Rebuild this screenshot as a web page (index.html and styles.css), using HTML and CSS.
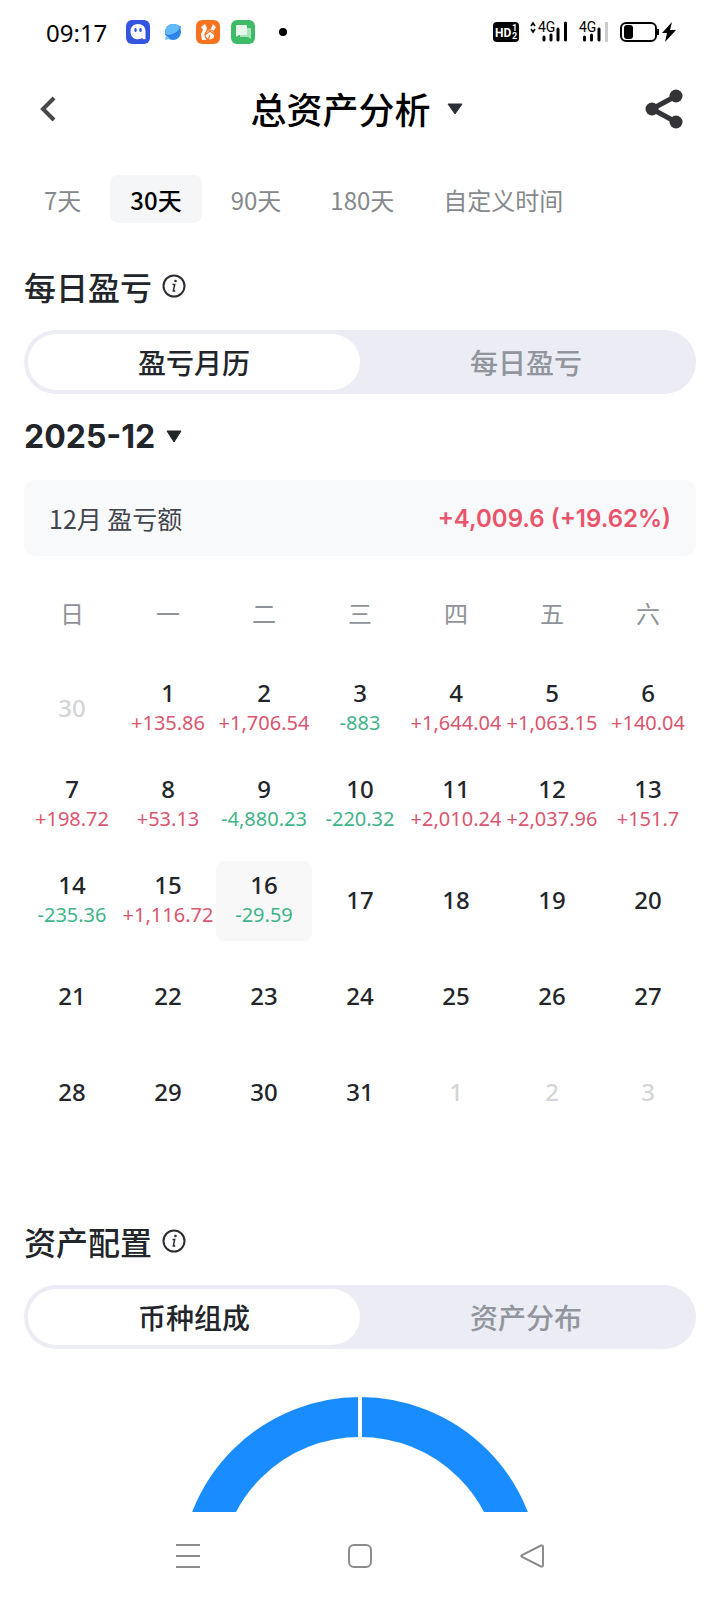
FILE: index.html
```html
<!DOCTYPE html>
<html lang="zh-CN">
<head>
  <meta charset="UTF-8">
  <meta name="viewport" content="width=device-width, initial-scale=1">
  <title>总资产分析</title>
  <link rel="stylesheet" href="styles.css">
</head>
<body>

  <!-- 状态栏 -->
  <div class="status">
    <span class="time">09:17</span>
    <div class="apps">
      <svg width="24" height="24" viewBox="0 0 24 24">
        <rect width="24" height="24" rx="6" fill="#3355e0"/>
        <path d="M12 4c4.400 0 7.500 3 7.500 7.200V19c-1.600.8-2.800.2-3.500-1-1 .8-2.400 1.200-4 1.200-4.600 0-7.500-3.200-7.500-7.800S7.600 4 12 4z" fill="#fff"/>
        <ellipse cx="9.500" cy="10" rx="1.300" ry="2" fill="#3355e0"/>
        <ellipse cx="14.500" cy="10" rx="1.300" ry="2" fill="#3355e0"/>
      </svg>
      <svg width="24" height="24" viewBox="0 0 24 24">
        <circle cx="12" cy="12" r="8" fill="#2f86ea"/>
        <path d="M19 6c1 3-2 6-6 8-4 2-8 2-9-1 0-5 3.600-9 8-9 3 0 5 .5 7 2z" fill="#62baf7"/>
        <path d="M19 6c1 3-2 6-6 8-4 2-7 2-9 0" stroke="#1f6fd8" stroke-width="1" fill="none"/>
        <path d="M4 20l1-5 4 4z" fill="#7cc8f8"/>
      </svg>
      <svg width="24" height="24" viewBox="0 0 24 24">
        <rect width="24" height="24" rx="6" fill="#f5731f"/>
        <path d="M5 7l4-3 2 4-1 3 5-2 2-5 3 3-3 5-4 1-3 7H6l-1-6 2-4z" fill="#fff"/>
        <circle cx="14" cy="15" r="5" fill="#fff" stroke="#f5731f" stroke-width="1.200"/>
        <path d="M9 15l5-4 6 5M14 15l-2 5" stroke="#f5731f" stroke-width="1.200" fill="none"/>
      </svg>
      <svg width="24" height="24" viewBox="0 0 24 24">
        <rect width="24" height="24" rx="6" fill="#3dbb66"/>
        <path d="M9 8h10a1 1 0 0 1 1 1v10l-3-2H9z" fill="#a9e3ba"/>
        <path d="M6 5h9a1 1 0 0 1 1 1v8a1 1 0 0 1-1 1H8l-3 2V6a1 1 0 0 1 1-1z" fill="#e6f7ea"/>
      </svg>
    </div>
    <span class="dot"></span>
    <div class="signals">
      <svg width="26" height="20" viewBox="0 0 26 20">
        <rect width="26" height="20" rx="4" fill="#000"/>
        <text x="2" y="15" class="hd">HD</text>
        <text x="19" y="9" class="hd-small">1</text>
        <text x="19" y="17" class="hd-small">2</text>
      </svg>
      <svg width="38" height="30" viewBox="0 -4 38 30">
        <path d="M1 5l2-3 2 3M1 8l2 3 2-3" stroke="#000" stroke-width="1.600" fill="none"/>
        <text x="8" y="11" class="net">4G</text>
        <path d="M14 16v3M21 14v5M28 8v11M35.500 2v17" stroke="#000" stroke-width="3" stroke-linecap="round"/>
      </svg>
      <svg width="30" height="30" viewBox="0 -4 30 30">
        <text x="0" y="11" class="net">4G</text>
        <path d="M5.500 16v3M12.500 14v5M20 8v11" stroke="#000" stroke-width="3" stroke-linecap="round"/>
        <path d="M27.500 1v20" stroke="#ccc" stroke-width="3"/>
      </svg>
      <svg width="57" height="20" viewBox="0 0 57 20">
        <rect x="1" y="1" width="35" height="18" rx="5" fill="none" stroke="#000" stroke-width="2"/>
        <rect x="4" y="3" width="9" height="14" rx="3" fill="#000"/>
        <path d="M38 7v6" stroke="#000" stroke-width="2"/>
        <path d="M52 0l-10 11h5l-2 9 11-12h-6z" fill="#000"/>
      </svg>
    </div>
  </div>

  <!-- 标题 -->
  <header class="header">
    <button class="icon-btn" aria-label="返回">
      <svg width="16" height="26" viewBox="0 0 16 26"><path d="M14 2L3 13l11 11" fill="none" stroke="#46484c" stroke-width="4"/></svg>
    </button>
    <button class="title">
      <h1>总资产分析</h1>
      <svg width="16" height="12" viewBox="0 0 16 12"><path d="M1 1h14L8 11z" fill="#2b2e33" stroke="#2b2e33" stroke-linejoin="round"/></svg>
    </button>
    <button class="icon-btn" aria-label="分享">
      <svg width="38" height="40" viewBox="0 0 38 40">
        <path d="M31 7L7 20l24 13" fill="none" stroke="#333438" stroke-width="5"/>
        <circle cx="31" cy="7" r="6.500" fill="#333438"/>
        <circle cx="7" cy="20" r="6.500" fill="#333438"/>
        <circle cx="31" cy="33" r="6.500" fill="#333438"/>
      </svg>
    </button>
  </header>

  <!-- 时间范围 -->
  <nav class="ranges">
    <button>7天</button>
    <button class="active">30天</button>
    <button>90天</button>
    <button>180天</button>
    <button>自定义时间</button>
  </nav>

  <main>
    <!-- 每日盈亏 -->
    <section class="daily">
      <h2>每日盈亏
        <svg width="24" height="24" viewBox="0 0 24 24"><circle cx="12" cy="12" r="10.500" fill="none" stroke="#2b2d33" stroke-width="2"/><circle cx="13.500" cy="7" r="1.300" fill="#2b2d33"/><path d="M10.500 10.500h2.200L11.300 17h2" fill="none" stroke="#2b2d33" stroke-width="1.500"/></svg>
      </h2>
      <div class="switch">
        <button class="active">盈亏月历</button>
        <button>每日盈亏</button>
      </div>

      <button class="month">2025-12
        <svg width="16" height="14" viewBox="0 0 16 14"><path d="M1 1h14L8 12z" fill="#22252a" stroke="#22252a" stroke-linejoin="round"/></svg>
      </button>

      <div class="summary">
        <span>12月 盈亏额</span>
        <strong>+4,009.6 (+19.62%)</strong>
      </div>

      <table class="calendar">
        <thead>
          <tr><th>日</th><th>一</th><th>二</th><th>三</th><th>四</th><th>五</th><th>六</th></tr>
        </thead>
        <tbody id="days"></tbody>
      </table>
    </section>

    <!-- 资产配置 -->
    <section>
      <h2>资产配置
        <svg width="24" height="24" viewBox="0 0 24 24"><circle cx="12" cy="12" r="10.500" fill="none" stroke="#2b2d33" stroke-width="2"/><circle cx="13.500" cy="7" r="1.300" fill="#2b2d33"/><path d="M10.500 10.500h2.200L11.300 17h2" fill="none" stroke="#2b2d33" stroke-width="1.500"/></svg>
      </h2>
      <div class="switch">
        <button class="active">币种组成</button>
        <button>资产分布</button>
      </div>
      <svg class="donut" width="360" height="115" viewBox="0 0 360 115">
        <circle cx="180" cy="180" r="160" fill="none" stroke="#198cff" stroke-width="40"/>
        <path d="M180 0v42" stroke="#fff" stroke-width="4"/>
      </svg>
    </section>
  </main>

  <!-- 系统导航 -->
  <footer class="sysnav">
    <button aria-label="菜单"><svg width="26" height="26" viewBox="0 0 26 26"><path d="M1 2h24M1 13h24M1 24h24" stroke="#8c8c8c" stroke-width="2"/></svg></button>
    <button aria-label="主页"><svg width="26" height="26" viewBox="0 0 26 26"><rect x="2" y="2" width="22" height="22" rx="5" fill="none" stroke="#8c8c8c" stroke-width="2"/></svg></button>
    <button aria-label="返回上一级"><svg width="26" height="26" viewBox="0 0 26 26"><path d="M22 2.500L3 12q-1.500 1 0 2l19 9.500q2 .5 2-1.500V4q0-2-2-1.500z" fill="none" stroke="#8c8c8c" stroke-width="2"/></svg></button>
  </footer>

  <script>
    const pnl = ["+135.86", "+1,706.54", "-883", "+1,644.04", "+1,063.15", "+140.04", "+198.72", "+53.13",
      "-4,880.23", "-220.32", "+2,010.24", "+2,037.96", "+151.7", "-235.36", "+1,116.72", "-29.59"];
    const today = 16;
    const tbody = document.getElementById("days");

    // 从 11 月 30 日开始，共 5 周
    for (let w = 0; w < 5; w++) {
      const tr = document.createElement("tr");
      for (let d = 0; d < 7; d++) {
        const n = w * 7 + d;
        const inMonth = n >= 1 && n <= 31;
        const day = n === 0 ? 30 : n > 31 ? n - 31 : n;
        const value = inMonth ? pnl[n - 1] : "";
        let html = `<span class="num">${day}</span>`;
        if (value) {
          html += `<span class="${value[0] === "+" ? "up" : "down"}">${value}</span>`;
        }
        const td = document.createElement("td");
        td.innerHTML = `<div class="day${inMonth ? "" : " other"}${n === today ? " today" : ""}">${html}</div>`;
        tr.appendChild(td);
      }
      tbody.appendChild(tr);
    }
  </script>

</body>
</html>
```
FILE: styles.css
```css
* {
  box-sizing: border-box;
}

body {
  margin: 0;
  background: #fff;
  color: #22252a;
  font-family: Inter, "Noto Sans CJK SC", sans-serif;
}

button {
  padding: 0;
  border: none;
  background: none;
  font: inherit;
  color: inherit;
  cursor: pointer;
}

svg {
  display: block;
  flex: none;
}

/* status bar */
.status {
  display: flex;
  align-items: center;
  height: 64px;
  padding: 0 43px 0 46px;
  color: #000;
}

.time {
  width: 80px;
  font-family: "Noto Sans", sans-serif;
  font-size: 24px;
}

.apps {
  display: flex;
  gap: 11px;
}

.dot {
  width: 8px;
  height: 8px;
  margin-left: 24px;
  border-radius: 50%;
  background: #000;
}

.signals {
  display: flex;
  align-items: center;
  gap: 11px;
  margin-left: auto;
}

.hd {
  fill: #fff;
  font: bold 12px Roboto, sans-serif;
}

.hd-small {
  fill: #fff;
  font: bold 9px Roboto, sans-serif;
}

.net {
  font: 14px Roboto, sans-serif;
}

/* header */
.header {
  display: flex;
  align-items: center;
  justify-content: space-between;
  height: 90px;
  padding: 0 37px 0 40px;
}

.title {
  display: flex;
  align-items: center;
  gap: 16px;
  margin-left: 12px;
  color: #000;
}

.title h1 {
  margin: 0;
  padding-top: 3px;
  font-size: 36px;
  font-weight: 500;
  line-height: 48px;
}

/* range tabs */
.ranges {
  display: flex;
  gap: 9px;
  padding: 21px 24px 0;
}

.ranges button {
  height: 48px;
  padding: 0 20px;
  border-radius: 8px;
  color: #85888c;
  font-family: "Noto Sans CJK SC", sans-serif;
  font-size: 24px;
}

.ranges .active {
  background: #f5f6f8;
  color: #000;
  font-weight: 500;
}

main {
  padding: 40px 24px 0;
}

.daily {
  margin-bottom: 77px;
}

h2 {
  display: flex;
  align-items: center;
  gap: 10px;
  margin: 0 0 17px;
  padding-top: 2px;
  font-size: 32px;
  font-weight: 500;
  line-height: 48px;
}

h2 svg {
  margin-bottom: 7px;
}

/* segmented switch */
.switch {
  display: flex;
  height: 64px;
  padding: 4px;
  border-radius: 32px;
  background: #ebecf4;
}

.switch button {
  flex: 1;
  border-radius: 28px;
  color: #92959e;
  font-size: 28px;
  font-weight: 500;
}

.switch .active {
  background: #fff;
  color: #22252a;
}

.month {
  display: flex;
  align-items: center;
  gap: 11px;
  margin: 22px 0;
  font-size: 32px;
  font-weight: 700;
  line-height: 42px;
}

.summary {
  display: flex;
  align-items: center;
  justify-content: space-between;
  height: 76px;
  padding: 0 25px;
  border-radius: 12px;
  background: #f8f9fb;
  font-size: 24px;
}

.summary span {
  color: #41454c;
  font-family: "Noto Sans CJK SC", sans-serif;
  font-size: 25px;
}

.summary strong {
  color: #e9546b;
  font-weight: 600;
}

/* calendar */
.calendar {
  width: 100%;
  margin-top: 39px;
  border-collapse: collapse;
  table-layout: fixed;
}

.calendar th {
  padding: 0 0 31px;
  color: #8f9298;
  font-size: 24px;
  font-weight: 400;
}

.calendar td {
  padding: 8px 0;
}

.day {
  display: flex;
  flex-direction: column;
  align-items: center;
  justify-content: center;
  height: 80px;
  padding-bottom: 2px;
  border-radius: 8px;
  font-family: "Noto Sans", sans-serif;
  font-size: 20px;
  line-height: 30px;
  white-space: nowrap;
}

.num {
  font-size: 24px;
  font-weight: 500;
}

.other {
  color: #d3d5d8;
}

.today {
  background: #f8f8f9;
}

.up {
  color: #da5670;
}

.down {
  color: #3fb489;
}

.donut {
  margin: 48px auto 0;
}

/* system nav */
.sysnav {
  display: flex;
  align-items: center;
  justify-content: center;
  gap: 146px;
  height: 88px;
}
```
